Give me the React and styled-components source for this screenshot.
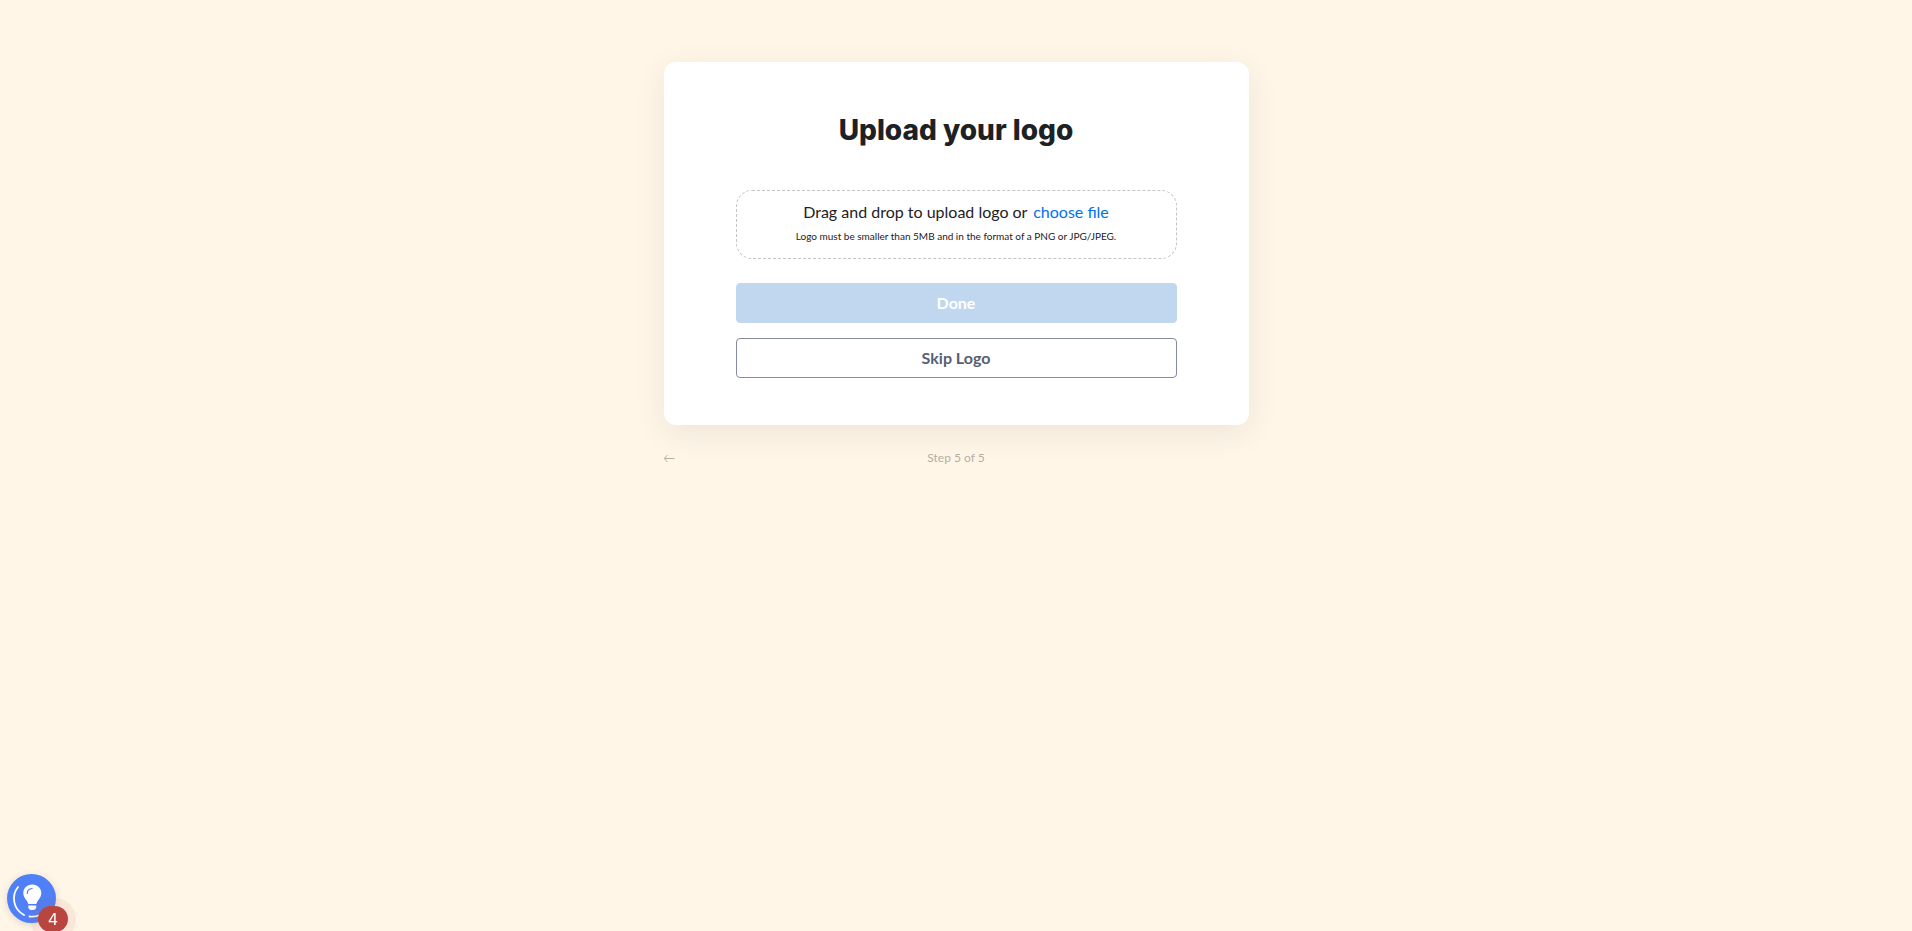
import React, { useState } from 'react'
import styled, { createGlobalStyle } from 'styled-components'

const GlobalStyle = createGlobalStyle`
  * {
    box-sizing: border-box;
  }
  body {
    margin: 0;
    min-height: 100vh;
    background: #fff6e8;
    color: #1d2124;
    font-family: Lato, 'Open Sans', sans-serif;
    font-size: 16px;
  }
`

const Page = styled.main`
  display: flex;
  flex-direction: column;
  align-items: center;
  padding: 62px 16px;
`

const Wizard = styled.div`
  width: 100%;
  max-width: 585px;
`

const Card = styled.section`
  display: flex;
  flex-direction: column;
  padding: 48px 72px 47px;
  border-radius: 12px;
  background: #fff;
  box-shadow: 0 8px 32px rgba(29, 33, 36, 0.08);
`

const Title = styled.h1`
  margin: 0 0 40px;
  font-family: Inter, sans-serif;
  font-size: 28px;
  font-weight: 800;
  line-height: 40px;
  text-align: center;
`

const DropZone = styled.div`
  padding: 9px 16px 14px;
  margin-bottom: 24px;
  border: 1px dashed #c4c4c4;
  border-radius: 16px;
  text-align: center;
`

const DropText = styled.p`
  margin: 0;
  line-height: 24px;
`

const DropHint = styled.p`
  margin: 4px 0 0;
  font-size: 10px;
  line-height: 16px;
`

const FileLabel = styled.label`
  margin-left: 2px;
  color: #0070f3;
  cursor: pointer;
`

const FileInput = styled.input`
  position: absolute;
  width: 1px;
  height: 1px;
  opacity: 0;
`

const Button = styled.button`
  height: 40px;
  padding: 0 16px 2px;
  border: 1px solid ${props => (props.$outline ? '#858c9b' : '#c1d7ef')};
  border-radius: 4px;
  background: ${props => (props.$outline ? '#fff' : '#c1d7ef')};
  color: ${props => (props.$outline ? '#566074' : '#fff')};
  font-family: inherit;
  font-size: 16px;
  font-weight: 700;
  cursor: pointer;

  & + & {
    margin-top: 15px;
  }
  &:disabled {
    cursor: default;
  }
`

const Footer = styled.footer`
  display: grid;
  grid-template-columns: 1fr auto 1fr;
  align-items: center;
  margin-top: 24px;
  color: #b4aea6;
  font-size: 12px;
  line-height: 18px;
`

const BackButton = styled.button`
  display: flex;
  justify-self: start;
  padding: 0;
  border: 0;
  background: none;
  color: inherit;
  cursor: pointer;
`

const Helper = styled.button`
  position: fixed;
  bottom: 8px;
  left: 7px;
  width: 49px;
  height: 49px;
  padding: 0;
  border: 0;
  border-radius: 50%;
  background: #4f80f7;
  box-shadow: 0 2px 8px rgba(0, 0, 0, 0.12);
  cursor: pointer;
`

const Badge = styled.span`
  position: absolute;
  top: 32px;
  left: 31px;
  width: 30px;
  height: 26px;
  border-radius: 13px;
  background: #b9453f;
  box-shadow: 0 0 0 8px rgba(185, 69, 63, 0.08);
  color: #fff;
  font-family: Inter, sans-serif;
  font-size: 16px;
  line-height: 26px;
  text-align: center;
`

const BackArrow = () => (
  <svg width="11" height="8" viewBox="0 0 11 8" fill="none" stroke="currentColor">
    <path d="M10.5 4.5H.5M3.5 1L.2 4.5 3.5 8" />
  </svg>
)

const Bulb = () => (
  <svg width="49" height="49" viewBox="0 0 49 49" fill="none">
    <path d="M11 13A18.5 18.5 0 0 0 17 41" stroke="#fff" strokeWidth="1.8" strokeLinecap="round" />
    <path d="M22.5 42.5A18.5 18.5 0 0 0 33 41" stroke="#fff" strokeWidth="1.8" strokeLinecap="round" />
    <path
      d="M25.3 10.6c-5.2 0-9 3.8-9 8.6 0 3 1.5 4.9 2.9 6.7 1 1.3 1.8 2.5 2 4.1h8.2c.2-1.6 1-2.8 2-4.1 1.4-1.8 2.9-3.7 2.9-6.7 0-4.8-3.8-8.6-9-8.6z"
      fill="#fff"
    />
    <path d="M21.3 31.5h8v1.4c0 1.4-1 2.5-2.2 3.2h-3.6c-1.2-.7-2.2-1.8-2.2-3.2z" fill="#fff" />
    <path d="M20.3 19.5c0-2.8 1.8-4.8 4.8-5" stroke="#4f80f7" strokeWidth="1.2" strokeLinecap="round" />
  </svg>
)

const App = () => {
  const [file, setFile] = useState(null)

  const handleDrop = event => {
    event.preventDefault()
    setFile(event.dataTransfer.files[0])
  }

  return (
    <>
      <GlobalStyle />
      <Page>
        <Wizard>
          <Card>
            <Title>Upload your logo</Title>
            <DropZone onDragOver={event => event.preventDefault()} onDrop={handleDrop}>
              <DropText>
                Drag and drop to upload logo or{' '}
                <FileLabel htmlFor="logo">choose file</FileLabel>
                <FileInput
                  id="logo"
                  type="file"
                  accept="image/png, image/jpeg"
                  onChange={event => setFile(event.target.files[0])}
                />
              </DropText>
              <DropHint>
                Logo must be smaller than 5MB and in the format of a PNG or JPG/JPEG.
              </DropHint>
            </DropZone>
            <Button type="button" disabled={!file}>Done</Button>
            <Button type="button" $outline>Skip Logo</Button>
          </Card>
          <Footer>
            <BackButton type="button" aria-label="Back">
              <BackArrow />
            </BackButton>
            <span>Step 5 of 5</span>
          </Footer>
        </Wizard>
      </Page>
      <Helper type="button">
        <Bulb />
        <Badge>4</Badge>
      </Helper>
    </>
  )
}

export default App
